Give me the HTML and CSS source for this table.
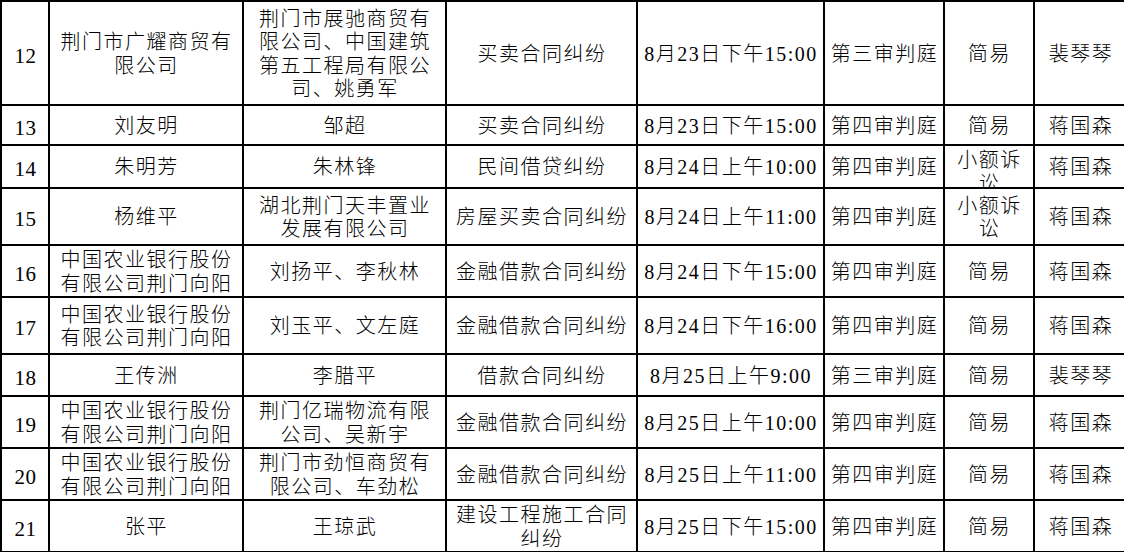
FILE: index.html
```html
<!DOCTYPE html>
<html lang="zh-CN">
<head>
<meta charset="utf-8">
<title>开庭公告</title>
<link rel="stylesheet" href="styles.css">
</head>
<body>
<table class="schedule">
  <colgroup>
    <col class="c-no">
    <col class="c-plaintiff">
    <col class="c-defendant">
    <col class="c-cause">
    <col class="c-time">
    <col class="c-court">
    <col class="c-proc">
    <col class="c-judge">
  </colgroup>
  <tbody>
    <tr class="h-104">
      <td class="num">12</td>
      <td>荆门市广耀商贸有限公司</td>
      <td class="wide">荆门市展驰商贸有限公司、中国建筑第五工程局有限公司、姚勇军</td>
      <td>买卖合同纠纷</td>
      <td>8月23日下午15:00</td>
      <td>第三审判庭</td>
      <td>简易</td>
      <td>裴琴琴</td>
    </tr>
    <tr class="h-40">
      <td class="num">13</td>
      <td>刘友明</td>
      <td class="wide">邹超</td>
      <td>买卖合同纠纷</td>
      <td>8月23日下午15:00</td>
      <td>第四审判庭</td>
      <td>简易</td>
      <td>蒋国森</td>
    </tr>
    <tr class="h-43">
      <td class="num">14</td>
      <td>朱明芳</td>
      <td class="wide">朱林锋</td>
      <td>民间借贷纠纷</td>
      <td>8月24日上午10:00</td>
      <td>第四审判庭</td>
      <td class="cell-clip"><div class="clip">小额诉讼</div></td>
      <td>蒋国森</td>
    </tr>
    <tr class="h-57">
      <td class="num">15</td>
      <td>杨维平</td>
      <td class="wide">湖北荆门天丰置业发展有限公司</td>
      <td>房屋买卖合同纠纷</td>
      <td>8月24日上午11:00</td>
      <td>第四审判庭</td>
      <td>小额诉讼</td>
      <td>蒋国森</td>
    </tr>
    <tr class="h-52">
      <td class="num">16</td>
      <td>中国农业银行股份有限公司荆门向阳</td>
      <td class="wide">刘扬平、李秋林</td>
      <td>金融借款合同纠纷</td>
      <td>8月24日下午15:00</td>
      <td>第四审判庭</td>
      <td>简易</td>
      <td>蒋国森</td>
    </tr>
    <tr class="h-57">
      <td class="num">17</td>
      <td>中国农业银行股份有限公司荆门向阳</td>
      <td class="wide">刘玉平、文左庭</td>
      <td>金融借款合同纠纷</td>
      <td>8月24日下午16:00</td>
      <td>第四审判庭</td>
      <td>简易</td>
      <td>蒋国森</td>
    </tr>
    <tr class="h-42">
      <td class="num">18</td>
      <td>王传洲</td>
      <td class="wide">李腊平</td>
      <td>借款合同纠纷</td>
      <td>8月25日上午9:00</td>
      <td>第三审判庭</td>
      <td>简易</td>
      <td>裴琴琴</td>
    </tr>
    <tr class="h-52">
      <td class="num">19</td>
      <td>中国农业银行股份有限公司荆门向阳</td>
      <td class="wide">荆门亿瑞物流有限公司、吴新宇</td>
      <td>金融借款合同纠纷</td>
      <td>8月25日上午10:00</td>
      <td>第四审判庭</td>
      <td>简易</td>
      <td>蒋国森</td>
    </tr>
    <tr class="h-52">
      <td class="num">20</td>
      <td>中国农业银行股份有限公司荆门向阳</td>
      <td class="wide">荆门市劲恒商贸有限公司、车劲松</td>
      <td>金融借款合同纠纷</td>
      <td>8月25日上午11:00</td>
      <td>第四审判庭</td>
      <td>简易</td>
      <td>蒋国森</td>
    </tr>
    <tr class="h-51">
      <td class="num">21</td>
      <td>张平</td>
      <td class="wide">王琼武</td>
      <td>建设工程施工合同纠纷</td>
      <td>8月25日下午15:00</td>
      <td>第四审判庭</td>
      <td>简易</td>
      <td>蒋国森</td>
    </tr>
  </tbody>
</table>
</body>
</html>
```

FILE: styles.css
```css
html, body {
  margin: 0;
  padding: 0;
  background: #ffffff;
}

body {
  overflow: hidden;
}

.schedule {
  border-collapse: collapse;
  table-layout: fixed;
  width: 1126px;
  font-family: "Liberation Serif", "Noto Sans CJK SC", serif;
  font-size: 20px;
  font-weight: 300;
  letter-spacing: 1.5px;
  line-height: 23.5px;
  color: #000000;
}

.schedule td {
  border: 2px solid #000000;
  padding: 3px 3px 0 4px;
  text-align: center;
  vertical-align: middle;
  overflow: hidden;
  word-break: normal;
}

.schedule td.wide {
  padding: 3px 9px 0 10px;
}

.c-no { width: 48px; }
.c-plaintiff { width: 194px; }
.c-defendant { width: 203px; }
.c-cause { width: 191px; }
.c-time { width: 187px; }
.c-court { width: 120px; }
.c-proc { width: 90px; }
.c-judge { width: 93px; }

.schedule td.num {
  padding: 7px 0 0 1px;
  letter-spacing: 0.5px;
  font-size: 21px;
}

.h-104 { height: 104px; }
.h-40 { height: 40px; }
.h-43 { height: 43px; }
.h-57 { height: 57px; }
.h-52 { height: 52px; }
.h-42 { height: 42px; }
.h-51 { height: 51px; }

.schedule td.cell-clip {
  vertical-align: top;
  padding-top: 3px;
}

.clip {
  height: 38px;
  overflow: hidden;
}
```
